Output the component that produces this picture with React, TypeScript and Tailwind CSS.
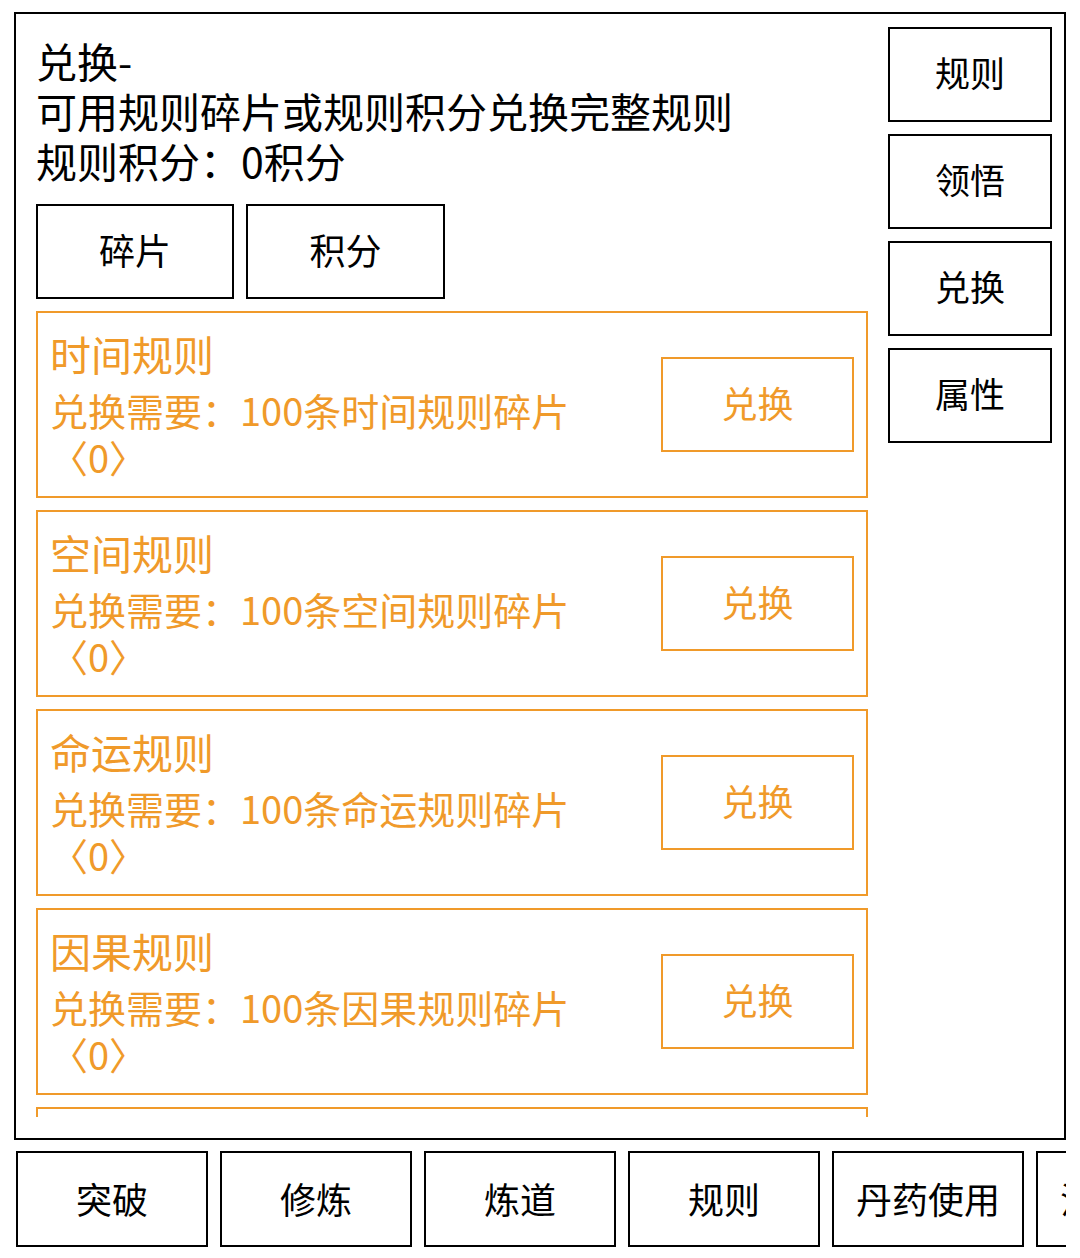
import React from "react";

const rules = ["时间规则", "空间规则", "命运规则", "因果规则", "生死规则"];
const sideTabs = ["规则", "领悟", "兑换", "属性"];
const bottomTabs = ["突破", "修炼", "炼道", "规则", "丹药使用", "法宝炼制"];

const RuleCard = ({ name }: { name: string }) => {
      return (
            <div className="shrink-0 h-[187px] border-2 border-[#f09a2a] flex items-center pl-[12px] pr-[12px]">
                  <div className="self-start pt-[15px] w-[590px] text-[#f09a2a]">
                        <div className="text-[41px] leading-[50px]">{name}</div>
                        <div className="text-[38px] leading-[47px] mt-[8px]">
                              兑换需要：100条{name}碎片〈0〉
                        </div>
                  </div>
                  <button className="ml-auto w-[193px] h-[95px] pb-[5px] border-2 border-[#f09a2a] text-[#f09a2a] text-[36px]">
                        兑换
                  </button>
            </div>
      );
};

const App = () => {
      return (
            <div
                  className="w-[1080px] h-[1258px] bg-white text-black overflow-hidden"
                  style={{ fontFamily: '"Noto Sans CJK SC", "Noto Sans", sans-serif' }}
            >
                  {/* main panel */}
                  <div className="ml-[14px] mt-[12px] w-[1052px] h-[1128px] border-2 border-black flex">
                        <div className="flex-1 min-w-0 pl-[20px] pt-[21px] pb-[21px] flex flex-col">
                              <div className="text-[41px] leading-[50px]">
                                    <div>兑换-</div>
                                    <div>可用规则碎片或规则积分兑换完整规则</div>
                                    <div>规则积分：0积分</div>
                              </div>
                              <div className="flex gap-[12px] mt-[19px]">
                                    <button className="w-[198px] h-[95px] pb-[6px] border-2 border-black text-[36px]">碎片</button>
                                    <button className="w-[199px] h-[95px] pb-[6px] border-2 border-black text-[36px]">积分</button>
                              </div>
                              <div className="flex-1 min-h-0 overflow-hidden mt-[12px] flex flex-col gap-[12px]">
                                    {rules.map((r) => (
                                          <RuleCard key={r} name={r} />
                                    ))}
                              </div>
                        </div>
                        <div className="w-[164px] ml-[20px] mr-[12px] pt-[13px] flex flex-col gap-[12px]">
                              {sideTabs.map((t) => (
                                    <button key={t} className="h-[95px] pb-[5px] border-2 border-black text-[35px]">
                                          {t}
                                    </button>
                              ))}
                        </div>
                  </div>

                  {/* bottom tabs */}
                  <div className="ml-[16px] mt-[11px] w-[1050px] overflow-hidden flex gap-[12px]">
                        {bottomTabs.map((t) => (
                              <button
                                    key={t}
                                    className="shrink-0 w-[192px] h-[96px] pb-[3px] border-2 border-black text-[36px]"
                              >
                                    {t}
                              </button>
                        ))}
                  </div>
            </div>
      );
};

export default App;
